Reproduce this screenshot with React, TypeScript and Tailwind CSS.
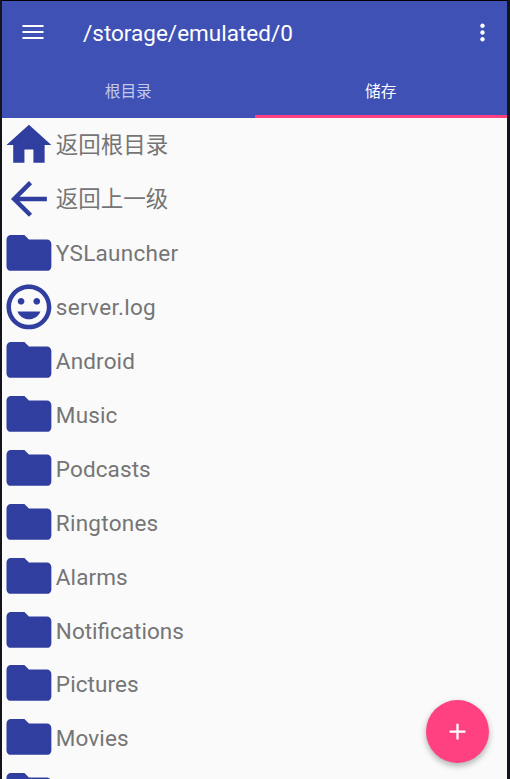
import React from 'react';

const HOME = 'M10 20v-6h4v6h5v-8h3L12 3 2 12h3v8z';
const BACK = 'M20 11H7.83l5.59-5.59L12 4l-8 8 8 8 1.41-1.41L7.83 13H20v-2z';
const FOLDER = 'M10 4H4c-1.1 0-1.99.9-1.99 2L2 18c0 1.1.9 2 2 2h16c1.1 0 2-.9 2-2V8c0-1.1-.9-2-2-2h-8l-2-2z';
const FACE =
  'M11.99 2C6.47 2 2 6.48 2 12s4.47 10 9.99 10C17.52 22 22 17.52 22 12S17.52 2 11.99 2zM12 20c-4.42 0-8-3.58-8-8s3.58-8 8-8 8 3.58 8 8-3.58 8-8 8zm3.5-9c.83 0 1.5-.67 1.5-1.5S16.33 8 15.5 8 14 8.67 14 9.5s.67 1.5 1.5 1.5zm-7 0c.83 0 1.5-.67 1.5-1.5S9.33 8 8.5 8 7 8.67 7 9.5 7.67 11 8.5 11zM12 17.5c2.33 0 4.31-1.46 5.11-3.5H6.89c.8 2.04 2.78 3.5 5.11 3.5z';

const entries: { name: string; icon: string; text: string }[] = [
  { name: '返回根目录', icon: HOME, text: '' },
  { name: '返回上一级', icon: BACK, text: 'pt-[1.3px]' },
  { name: 'YSLauncher', icon: FOLDER, text: 'pt-[1.3px] tracking-[0.3px]' },
  { name: 'server.log', icon: FACE, text: 'pt-[1.3px] tracking-[0.3px]' },
  { name: 'Android', icon: FOLDER, text: 'pt-[1.3px] tracking-[0.15px]' },
  { name: 'Music', icon: FOLDER, text: 'pt-[1.3px] tracking-[0.15px]' },
  { name: 'Podcasts', icon: FOLDER, text: 'pt-[1.3px] tracking-[0.1px]' },
  { name: 'Ringtones', icon: FOLDER, text: 'pt-[2.4px] tracking-[0.25px]' },
  { name: 'Alarms', icon: FOLDER, text: 'pt-[2.4px] tracking-[0.1px]' },
  { name: 'Notifications', icon: FOLDER, text: 'pt-[2.4px] tracking-normal' },
  { name: 'Pictures', icon: FOLDER, text: 'pt-[1.8px] tracking-[0.1px]' },
  { name: 'Movies', icon: FOLDER, text: 'pt-[1.8px] tracking-[0.1px]' },
  { name: '', icon: FOLDER, text: '' },
];

function Glyph({ d, className }: { d: string; className: string }) {
  return (
    <svg viewBox="0 0 24 24" fill="currentColor" className={className}>
      <path d={d} />
    </svg>
  );
}

export default function App() {
  return (
    <div className="relative h-[779px] w-[510px] overflow-hidden bg-[#14141c] pr-[3px] pl-[2px] font-['Roboto','Noto_Sans_CJK_SC',sans-serif]">
      <header className="flex h-[118px] flex-col border-t border-black bg-[#3f51b5] text-white">
        <div className="flex h-[63px] shrink-0 items-center pr-[11px] pl-[17px]">
          <Glyph className="mt-[-2px] size-[28px] shrink-0" d="M3 18h18v-1.8H3V18zm0-5.1h18v-1.8H3v1.8zM3 6v1.8h18V6H3z" />
          <h1 className="ml-[36px] flex-1 pt-px text-[22.5px] leading-[30px] whitespace-nowrap">
            /storage/emulated/0
          </h1>
          <Glyph
            className="size-[27px] shrink-0"
            d="M12 8c1.1 0 2-.9 2-2s-.9-2-2-2-2 .9-2 2 .9 2 2 2zm0 2c-1.1 0-2 .9-2 2s.9 2 2 2 2-.9 2-2-.9-2-2-2zm0 6c-1.1 0-2 .9-2 2s.9 2 2 2 2-.9 2-2-.9-2-2-2z"
          />
        </div>
        <nav className="grid h-[54px] grid-cols-2 text-center text-[15.7px] leading-[46px]">
          <div className="pt-[5px] text-white/70">根目录</div>
          <div className="border-b-[3px] border-[#ff4081] pt-[5px]">储存</div>
        </nav>
      </header>
      <main className="h-[661px] overflow-hidden bg-[#fafafa]">
        {entries.map((e, i) => (
          <div key={i} className="flex h-[53.85px] items-center text-[#757575]">
            <Glyph className="size-[53.85px] shrink-0 text-[#303f9f]" d={e.icon} />
            {e.name && (
              <span className={`text-[22.5px] leading-[30px] whitespace-nowrap ${e.text}`}>{e.name}</span>
            )}
          </div>
        ))}
      </main>
      <button className="absolute top-[700px] left-[426px] flex size-[63px] items-center justify-center rounded-full bg-[#ff4081] text-white shadow-[0_3px_6px_rgba(0,0,0,0.3)]">
        <Glyph className="size-[27px]" d="M19 13h-6v6h-2v-6H5v-2h6V5h2v6h6v2z" />
      </button>
    </div>
  );
}
